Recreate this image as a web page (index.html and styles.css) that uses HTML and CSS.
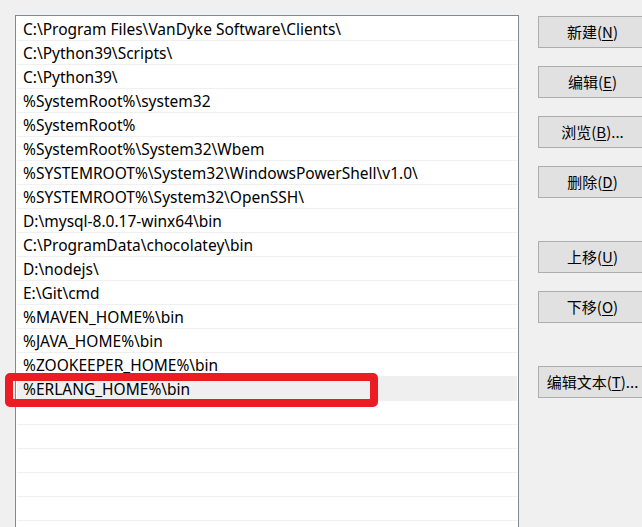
FILE: index.html
```html
<!DOCTYPE html>
<html lang="zh-CN">
<head>
<meta charset="utf-8">
<title>编辑环境变量</title>
<link rel="stylesheet" href="styles.css">
</head>
<body>
<div class="dialog">
  <div class="list">
    <div class="row">C:\Program Files\VanDyke Software\Clients\</div>
    <div class="row">C:\Python39\Scripts\</div>
    <div class="row">C:\Python39\</div>
    <div class="row">%SystemRoot%\system32</div>
    <div class="row">%SystemRoot%</div>
    <div class="row">%SystemRoot%\System32\Wbem</div>
    <div class="row">%SYSTEMROOT%\System32\WindowsPowerShell\v1.0\</div>
    <div class="row">%SYSTEMROOT%\System32\OpenSSH\</div>
    <div class="row">D:\mysql-8.0.17-winx64\bin</div>
    <div class="row">C:\ProgramData\chocolatey\bin</div>
    <div class="row">D:\nodejs\</div>
    <div class="row">E:\Git\cmd</div>
    <div class="row">%MAVEN_HOME%\bin</div>
    <div class="row">%JAVA_HOME%\bin</div>
    <div class="row">%ZOOKEEPER_HOME%\bin</div>
    <div class="row selected">%ERLANG_HOME%\bin</div>
    <div class="row"></div>
    <div class="row"></div>
    <div class="row"></div>
    <div class="row"></div>
    <div class="row"></div>
  </div>
  <div class="buttons">
    <button class="btn">新建(<u>N</u>)</button>
    <button class="btn">编辑(<u>E</u>)</button>
    <button class="btn">浏览(<u>B</u>)...</button>
    <button class="btn">删除(<u>D</u>)</button>
    <button class="btn btn-group">上移(<u>U</u>)</button>
    <button class="btn">下移(<u>O</u>)</button>
    <button class="btn btn-group">编辑文本(<u>T</u>)...</button>
  </div>
</div>
<div class="highlight"></div>
</body>
</html>
```
FILE: styles.css
```css
html, body {
  margin: 0;
  padding: 0;
  background: #f0f0f0;
  overflow: hidden;
  height: 527px;
}
body {
  position: relative;
  font-family: "Noto Sans", "Noto Sans CJK SC", sans-serif;
  color: #000;
}
.dialog {
  display: flex;
  align-items: flex-start;
  padding: 15px 0 0 15px;
  height: 512px;
}
.list {
  flex: none;
  box-sizing: border-box;
  width: 504px;
  height: 512px;
  overflow: hidden;
  border: 1px solid #828790;
  border-bottom: 0;
  background: #fff;
  padding: 1px 1px 0 1px;
}
.row {
  height: 21px;
  padding-top: 2px;
  border-bottom: 1px solid #f0f0f0;
  padding-left: 6px;
  font-size: 15.5px;
  line-height: 21px;
  white-space: nowrap;
}
.row.selected {
  background: #efefef;
}
.buttons {
  display: flex;
  flex-direction: column;
  margin-left: 19px;
  padding-top: 1px;
  gap: 18px;
  flex: none;
}
.btn {
  width: 109px;
  height: 32px;
  margin: 0;
  padding: 0;
  border: 1px solid #adadad;
  background: #e1e1e1;
  font-family: "Noto Sans CJK SC", sans-serif;
  font-size: 15px;
  color: #000;
  text-align: center;
  line-height: 28px;
}
.btn u {
  text-decoration-thickness: 1px;
  text-underline-offset: 2px;
}
.btn-group {
  margin-top: 25px;
}
.highlight {
  position: absolute;
  left: 5px;
  top: 373px;
  width: 373px;
  height: 34px;
  box-sizing: border-box;
  border: 8px solid #ed1c24;
  border-radius: 5px;
}
```
